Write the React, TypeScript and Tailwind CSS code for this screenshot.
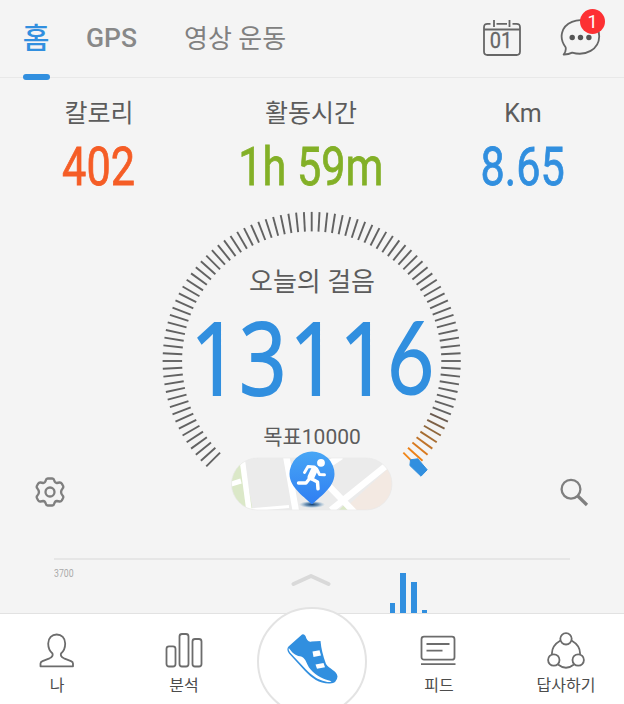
import type { ReactNode } from 'react';
import { clsx } from 'clsx';

const KR = "font-['Roboto','Noto_Sans_CJK_KR',sans-serif]";

interface StatProps {
  label: string;
  value: string;
  className: string;
  valueClass: string;
}

const Stat = ({ label, value, className, valueClass }: StatProps) => (
  <div className={clsx('flex flex-col items-center whitespace-nowrap', className)}>
    <span className="h-[37px] text-[25px] leading-[37px] text-[#5c5c5c]">{label}</span>
    <span className={clsx('mt-2 h-[54px] scale-x-[0.8] text-[54px] leading-[54px] [-webkit-text-stroke:0.8px]', valueClass)}>
      {value}
    </span>
  </div>
);

const CalendarIcon = () => (
  <svg width="40" height="40" viewBox="0 0 40 40" fill="none" stroke="#666" strokeWidth="1.8">
    <path d="M8.5 4.8H5.5Q2 4.8 2 8.3V32.5Q2 36 5.5 36H34.5Q38 36 38 32.5V8.3Q38 4.8 34.5 4.8H30.5M14.5 4.8H25" />
    <path d="M2 10.5H38M12 1V8M27.5 1V8" />
    <text x="19" y="28.8" textAnchor="middle" fontFamily="Roboto, sans-serif" fontSize="22" fontWeight="400" fill="#666" stroke="#666" strokeWidth="0.3" textLength="22.5" lengthAdjust="spacingAndGlyphs">
      01
    </text>
  </svg>
);

const ChatIcon = () => (
  <svg width="42" height="40" viewBox="0 0 42 40" fill="none" stroke="#666" strokeWidth="1.8">
    <path d="M5.6 29.2C-1.5 20 1.2 8.3 12 3.9C24 -1 39.5 6 39.2 18.5C39 31.5 25.5 38.5 12.2 34.6C9.7 35.9 7.1 36.6 3.6 36.5Q6.5 33 5.6 29.2Z" strokeLinejoin="round" />
    <g fill="#555" stroke="none">
      <circle cx="12.2" cy="19.5" r="2.7" />
      <circle cx="20.5" cy="19.5" r="2.7" />
      <circle cx="28.9" cy="19.5" r="2.7" />
    </g>
  </svg>
);

// 91 marcas, de -135 a 135 grados; las ultimas pasan de gris a naranja
const ticks = Array.from({ length: 91 }, (_, i) => -135 + i * 3);
const endColors = ['#6b5c51', '#7d6046', '#8f673c', '#a66d32', '#bf7329', '#d97a1f', '#ec8117', '#f08619'];

const tickColor = (i: number) => (i >= 83 ? endColors[i - 83] : '#626262');

const Dial = () => (
  <svg width="300" height="270" viewBox="0 0 300 270" className="block">
    {ticks.map((angle, i) => (
      <line
        key={angle}
        x1="149.7"
        y1="0.9"
        x2="149.7"
        y2="20.4"
        stroke={tickColor(i)}
        strokeWidth="1.9"
        transform={`rotate(${angle} 149.7 150)`}
      />
    ))}
    <path d="M248.5 248.8L255.8 247.8L265.2 258.8L259 265.2L247.9 254.5Z" fill="#318fdf" stroke="#318fdf" strokeLinejoin="round" />
  </svg>
);

const MapPill = () => (
  <svg width="162" height="62" viewBox="0 0 162 62" className="block">
    <defs>
      <clipPath id="pill">
        <rect x="0.5" y="8" width="160.500" height="52" rx="26" />
      </clipPath>
      <linearGradient id="pin" x1="0" y1="0" x2="0" y2="1">
        <stop offset="0" stopColor="#48a6f5" />
        <stop offset="1" stopColor="#2f7ef2" />
      </linearGradient>
      <radialGradient id="shade">
        <stop offset="0" stopColor="#123b68" />
        <stop offset="0.5" stopColor="#376b9b" stopOpacity="0.7" />
        <stop offset="1" stopColor="#6fa3cc" stopOpacity="0" />
      </radialGradient>
    </defs>
    <g clipPath="url(#pill)">
      <rect y="7" width="162" height="55" fill="#ebebeb" />
      <path d="M0 7H12L22 62H0Z" fill="#dbe8c8" />
      <path d="M162 14V62H110Z" fill="#f3e9e2" />
      <path d="M106 62L113 55L119 62Z" fill="#dbe8c8" />
      <g stroke="#fff" fill="none">
        <path d="M10.500 4L18.500 64" strokeWidth="5.500" />
        <path d="M0 34L10 31" strokeWidth="5" />
        <path d="M18 60L58 56.500" strokeWidth="3" />
        <path d="M55 5L65 62" strokeWidth="6.500" />
        <path d="M100 60L156 15" strokeWidth="6.500" />
        <path d="M94 32L126 65" strokeWidth="6.500" />
        <path d="M98 14L110 6" strokeWidth="7" />
      </g>
    </g>
    <rect x="0.5" y="8" width="160.500" height="52" rx="26" fill="none" stroke="#e9e9e9" strokeWidth="0.7" />
    <ellipse cx="81" cy="54.5" rx="13" ry="3.5" fill="url(#shade)" />
    <path d="M81 54.5C75 48 58.5 38 58.5 24A22.5 22.5 0 0 1 103.500 24C103.500 38 87 48 81 54.500Z" fill="url(#pin)" />
    <g stroke="#fff" fill="none" strokeLinecap="round" strokeLinejoin="round">
      <path d="M73.500 22.5L77 16.5L83.500 17" strokeWidth="2.9" />
      <path d="M83.500 19.500L80 27" strokeWidth="6.800" />
      <path d="M86 19.500L88.500 24.500L93.500 24.800" strokeWidth="2.900" />
      <path d="M79 28L75 33H67.500" strokeWidth="3.400" />
      <path d="M80 28.500L86.500 32L87 38.800" strokeWidth="3.500" />
    </g>
    <circle cx="90" cy="12.800" r="3.900" fill="#fff" />
  </svg>
);

const GearIcon = () => (
  <svg width="30" height="32" viewBox="0 0 30 32" fill="none" stroke="#7f7f7f" strokeWidth="2.3" strokeLinejoin="round">
    <path d="M12.700 2.500H17.300Q18.800 2.500 19.200 4.200Q19.800 6.800 21.800 7L24.500 6.500Q26 6.300 26.800 7.600L28 9.800Q28.800 11.200 27.600 12.400Q24.500 16 27.600 19.600Q28.800 20.800 28 22.200L26.800 24.400Q26 25.700 24.500 25.500L21.800 25Q19.800 25.200 19.200 27.800Q18.800 29.500 17.300 29.500H12.700Q11.200 29.500 10.800 27.800Q10.200 25.200 8.200 25L5.500 25.500Q4 25.700 3.200 24.400L2 22.200Q1.200 20.800 2.400 19.600Q5.500 16 2.400 12.400Q1.200 11.200 2 9.800L3.200 7.600Q4 6.300 5.500 6.500L8.200 7Q10.200 6.800 10.800 4.200Q11.200 2.500 12.700 2.500Z" />
    <circle cx="15" cy="16" r="4.500" />
  </svg>
);

const SearchIcon = () => (
  <svg width="30" height="30" viewBox="0 0 30 30" fill="none" stroke="#7f7f7f">
    <circle cx="11" cy="11.200" r="9.400" strokeWidth="2.300" />
    <path d="M17.800 18L27 27" strokeWidth="3.200" />
  </svg>
);

const NavItem = ({ label, className, children }: { label: string; className: string; children: ReactNode }) => (
  <div className={clsx('flex flex-col items-center pt-[17px]', className)}>
    <svg width="40" height="40" viewBox="0 0 40 40" fill="none" stroke="#6c6c6c" strokeWidth="1.800" strokeLinejoin="round">
      {children}
    </svg>
    <span className="mt-[3px] h-6 text-[16px] leading-6 whitespace-nowrap text-[#4c4c4c]">{label}</span>
  </div>
);

const ShoeIcon = () => (
  <svg width="52" height="52" viewBox="0 0 52 52" className="mb-[5px] block">
    <path
      d="M2.500 13.500L16 1.500Q18 0.500 19.500 3C20.500 6.500 22.500 9.500 25.500 8.500L34.500 8Q35.500 19 40 31C43 36 51 37.500 51.500 43.500Q51 50 44 50.500C34 51 26 45.500 19 38L3 20.500Q0 16.500 2.500 13.500Z"
      fill="#318fdf"
    />
    <path
      d="M2.800 15C6 19.500 9 22.500 14 23.300C19.500 24.300 20 29.500 23 34.500C27.500 41 36 45.500 42 47.300C45 48 46 48.500 45 48.800C43 49.300 41.500 49 39.500 48.500C32 47 26 42.500 20 36.500L4 19.500Q2 17 2.800 15Z"
      fill="#fff"
    />
    <path d="M26.500 18.500L33.500 17.300L35 22.500L27.500 24Z M29.500 31.500L37.500 30L39 34.300L31 35.700Z" fill="#fff" />
  </svg>
);

const bars = [10, 40, 31, 3];

const digitClass = (digit: string) => {
  if (digit === '6') return 'scale-x-[0.8]';
  if (digit === '1') return 'translate-x-[2px] scale-x-[0.84] [-webkit-text-stroke:1.8px]';
  return 'scale-x-[0.82] [-webkit-text-stroke:1.8px]';
};

export default function App() {
  return (
    <div className={clsx('flex h-[704px] w-[624px] flex-col overflow-hidden bg-[#f4f4f4]', KR)}>
      <header className="flex h-[78px] shrink-0 border-b border-[#e8e8e8] pl-[22px] whitespace-nowrap">
        <div className="flex w-7 flex-col items-center">
          <span className="h-[74px] text-[29px] leading-[79px] font-medium text-[#318fdf]">홈</span>
          <span className="h-[6px] w-[27px] shrink-0 rounded-full bg-[#318fdf]" />
        </div>
        <span className="ml-9 w-[52px] text-[26px] leading-[77px] font-medium text-[#888]">
          <span className="inline-block origin-left scale-x-[1.02]">GPS</span>
        </span>
        <span className="ml-[46px] w-[104px] text-[26px] leading-[79px] text-[#808080]">영상 운동</span>
        <div className="ml-[194px] pt-[19px]">
          <CalendarIcon />
        </div>
        <div className="relative ml-[38px] pt-[18px]">
          <ChatIcon />
          <span className="absolute top-[9px] left-5 size-[25px] rounded-full bg-[#fd3033] text-center text-[18px] leading-[26px] text-white">
            1
          </span>
        </div>
      </header>

      <section className="flex pt-[17px]">
        <Stat label="칼로리" value="402" className="ml-[39px] w-[120px]" valueClass="text-[#f55d26]" />
        <Stat label="활동시간" value="1h 59m" className="ml-[62px] w-[180px]" valueClass="text-[#83b027]" />
        <Stat label="Km" value="8.65" className="ml-[62px] w-[120px]" valueClass="text-[#318fdf]" />
      </section>

      <section className="grid grid-cols-[162px_300px_162px] pt-[17px]">
        <div className="col-start-2 row-start-1">
          <Dial />
        </div>
        <div className="col-start-2 row-start-1 flex flex-col items-center pt-[53px] whitespace-nowrap text-[#5c5c5c]">
          <span className="h-9 text-[26px] leading-9">오늘의 걸음</span>
          <span className="mt-[6px] flex h-[100px] font-['Open_Sans',sans-serif] text-[101px] leading-[100px] text-[#318fdf]">
            {'13116'.split('').map((digit, i) => (
              <span
                key={i}
                className={clsx(
                  'flex w-[49.400px] justify-center',
                  digit === '6' && "font-['Lato',sans-serif] text-[102px] font-medium"
                )}
              >
                <span className={digitClass(digit)}>{digit}</span>
              </span>
            ))}
          </span>
          <span className="mt-[17px] h-7 text-[21px] leading-7">목표10000</span>
        </div>
        <div className="col-start-1 row-start-1 mt-[265px] ml-[35px] h-8">
          <GearIcon />
        </div>
        <div className="col-start-3 row-start-1 mt-[267px] ml-[98px] h-8">
          <SearchIcon />
        </div>
        <div className="col-start-2 row-start-1 mt-[238.500px] ml-[69px] h-[62px]">
          <MapPill />
        </div>
      </section>

      <section className="mt-auto ml-[54px] flex h-[55px] w-[516px] shrink-0 border-t-2 border-[#e6e6e6]">
        <span className="w-6 pt-[8px] text-[10px] leading-[12px] text-[#aaa]">
          <span className="inline-block origin-left scale-x-[0.87]">3700</span>
        </span>
        <svg width="40" height="14" viewBox="0 0 40 14" className="mt-[13px] ml-[213px]" fill="none" stroke="#d9d9d9" strokeWidth="4" strokeLinecap="round">
          <path d="M2.500 11L20 3L37.500 11" strokeLinejoin="round" />
        </svg>
        <div className="ml-[58.500px] flex items-end gap-[5.300px]">
          {bars.map((h) => (
            <span key={h} className="w-[5.500px] bg-[#318fdf]" style={{ height: h }} />
          ))}
        </div>
      </section>

      <nav className="relative flex h-[91px] shrink-0 border-t border-[#e2e2e2] bg-white">
        <NavItem label="나" className="ml-[17px] w-20">
          <path d="M3.500 35.300V32.500Q3.500 31 5.500 30.200L12.500 27.300Q16.500 25.500 15.500 22.500C12.500 20 11.200 16.500 11.200 12.500C11.200 7 15 3.500 19.700 3.500C24.500 3.500 28.200 7 28.200 12.500C28.200 16.500 27 20 24 22.500Q23 25.500 27 27.300L34 30.200Q36 31 36 32.500V35.300Z" />
        </NavItem>
        <NavItem label="분석" className="ml-[47px] w-20">
          <rect x="2.500" y="15.300" width="9" height="20.200" rx="2.500" />
          <rect x="15.500" y="3" width="9" height="32.500" rx="2.500" />
          <rect x="28.500" y="8" width="9" height="27.500" rx="2.500" />
        </NavItem>
        <NavItem label="피드" className="ml-[175px] w-20">
          <rect x="2.500" y="5.700" width="33" height="23" rx="2.500" />
          <path d="M7.500 13H30.500M7.500 19.700H23.500M2 33.200H36.500" />
        </NavItem>
        <NavItem label="답사하기" className="ml-[47px] w-20">
          <circle cx="20" cy="7.800" r="5.700" />
          <circle cx="7.800" cy="29" r="5.700" />
          <circle cx="32.200" cy="29" r="5.700" />
          <path d="M14.500 9.500C8.500 13 5.500 17.500 6 23.500M25.500 9.500C31.500 13 34.500 17.500 34 23.500M12 33.500C17 37.500 23 37.500 28 33.500" />
        </NavItem>
        <div className="absolute -top-[7px] left-[257px] flex h-[109px] w-[110px] items-center justify-center rounded-full border-2 border-[#e3e3e3] bg-white">
          <ShoeIcon />
        </div>
      </nav>
    </div>
  );
}
